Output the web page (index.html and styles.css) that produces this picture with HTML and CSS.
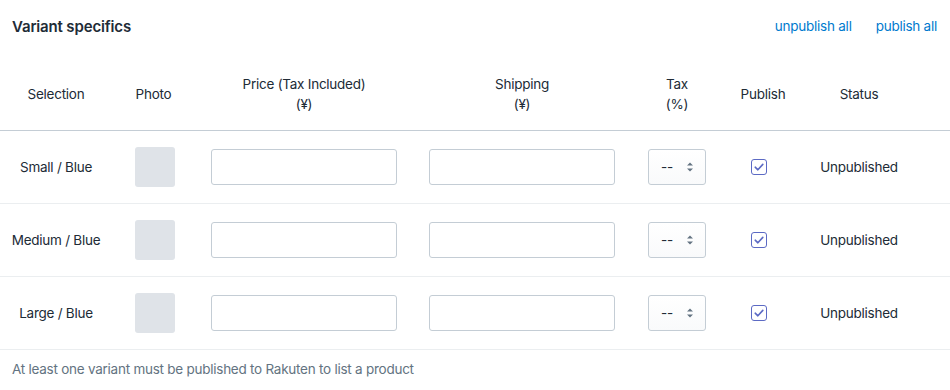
FILE: index.html
```html
<!DOCTYPE html>
<html>
<head>
    <title>Variant specifics</title>
    <link rel="stylesheet" href="styles.css">
</head>
<body>
    <div class="card">
        <div class="card-head">
            <h2>Variant specifics</h2>
            <div class="actions">
                <a href="#">unpublish all</a>
                <a href="#">publish all</a>
            </div>
        </div>

        <div class="row head-row">
            <div class="cell">Selection</div>
            <div class="cell">Photo</div>
            <div class="cell">Price (Tax Included)<br>(¥)</div>
            <div class="cell">Shipping<br>(¥)</div>
            <div class="cell">Tax<br>(%)</div>
            <div class="cell">Publish</div>
            <div class="cell">Status</div>
            <div class="cell"></div>
        </div>

        <div class="row">
            <div class="cell name">Small / Blue</div>
            <div class="cell"><div class="photo"></div></div>
            <div class="cell"><input class="field" type="text"></div>
            <div class="cell"><input class="field" type="text"></div>
            <div class="cell">
                <div class="select"><span>--</span>
                    <svg width="8" height="12" viewBox="0 0 8 12"><path d="M4 1.5 L7 4.5 H1 Z M4 10.5 L7 7.5 H1 Z" fill="#637381"/></svg>
                </div>
            </div>
            <div class="cell">
                <span class="check"><svg width="12" height="12" viewBox="0 0 12 12"><path d="M2.2 6.2 L4.9 8.8 L9.8 3.4" fill="none" stroke="#5c6ac4" stroke-width="1.6" stroke-linecap="round" stroke-linejoin="round"/></svg></span>
            </div>
            <div class="cell">Unpublished</div>
            <div class="cell"></div>
        </div>

        <div class="row">
            <div class="cell name">Medium / Blue</div>
            <div class="cell"><div class="photo"></div></div>
            <div class="cell"><input class="field" type="text"></div>
            <div class="cell"><input class="field" type="text"></div>
            <div class="cell">
                <div class="select"><span>--</span>
                    <svg width="8" height="12" viewBox="0 0 8 12"><path d="M4 1.5 L7 4.5 H1 Z M4 10.5 L7 7.5 H1 Z" fill="#637381"/></svg>
                </div>
            </div>
            <div class="cell">
                <span class="check"><svg width="12" height="12" viewBox="0 0 12 12"><path d="M2.2 6.2 L4.9 8.8 L9.8 3.4" fill="none" stroke="#5c6ac4" stroke-width="1.6" stroke-linecap="round" stroke-linejoin="round"/></svg></span>
            </div>
            <div class="cell">Unpublished</div>
            <div class="cell"></div>
        </div>

        <div class="row">
            <div class="cell name">Large / Blue</div>
            <div class="cell"><div class="photo"></div></div>
            <div class="cell"><input class="field" type="text"></div>
            <div class="cell"><input class="field" type="text"></div>
            <div class="cell">
                <div class="select"><span>--</span>
                    <svg width="8" height="12" viewBox="0 0 8 12"><path d="M4 1.5 L7 4.5 H1 Z M4 10.5 L7 7.5 H1 Z" fill="#637381"/></svg>
                </div>
            </div>
            <div class="cell">
                <span class="check"><svg width="12" height="12" viewBox="0 0 12 12"><path d="M2.2 6.2 L4.9 8.8 L9.8 3.4" fill="none" stroke="#5c6ac4" stroke-width="1.6" stroke-linecap="round" stroke-linejoin="round"/></svg></span>
            </div>
            <div class="cell">Unpublished</div>
            <div class="cell"></div>
        </div>

        <p class="note">At least one variant must be published to Rakuten to list a product</p>
    </div>
</body>
</html>
```

FILE: styles.css
```css
body { margin: 0; font-family: Inter, "Noto Sans", sans-serif; font-size: 13.5px; letter-spacing: -0.25px; color: #212b36; background: #fff; }
.card { width: 950px; }
.card-head { display: flex; justify-content: space-between; align-items: center; height: 52px; padding: 0 13px 0 12px; }
.card-head h2 { margin: 0; font-size: 15px; font-weight: 600; letter-spacing: -0.15px; }
.actions { display: flex; gap: 24px; }
.actions a { color: #007ace; text-decoration: none; }

.row { display: grid; grid-template-columns: 112px 83px 218px 218px 92px 80px 112px 1fr; height: 72px; border-bottom: 1px solid #ebeef0; }
.head-row { height: 72px; margin-top: 6px; border-bottom: 1px solid #c4cdd5; line-height: 20px; }
.cell { display: flex; align-items: center; justify-content: center; text-align: center; padding: 0 16px; min-width: 0; white-space: nowrap; }
.head-row .cell, .cell.name { padding: 0 4px; }

.photo { width: 40px; height: 40px; background: #dfe3e8; border-radius: 3px; margin-left: 3px; flex: none; }
.field { width: 100%; height: 36px; box-sizing: border-box; border: 1px solid #c4cdd5; border-radius: 3px; background: #fff; font: inherit; padding: 0 10px; }
.select { width: 58px; height: 36px; box-sizing: border-box; border: 1px solid #c4cdd5; border-radius: 3px; background: linear-gradient(#fff, #f9fafb); display: flex; align-items: center; justify-content: space-between; padding: 0 11px 0 12px; color: #212b36; flex: none; }
.check { width: 16px; height: 16px; box-sizing: border-box; border: 1.5px solid #5c6ac4; border-radius: 3px; display: flex; align-items: center; justify-content: center; margin-right: 8px; flex: none; }

.note { margin: 0; padding: 11px 12px; color: #637381; }
```
